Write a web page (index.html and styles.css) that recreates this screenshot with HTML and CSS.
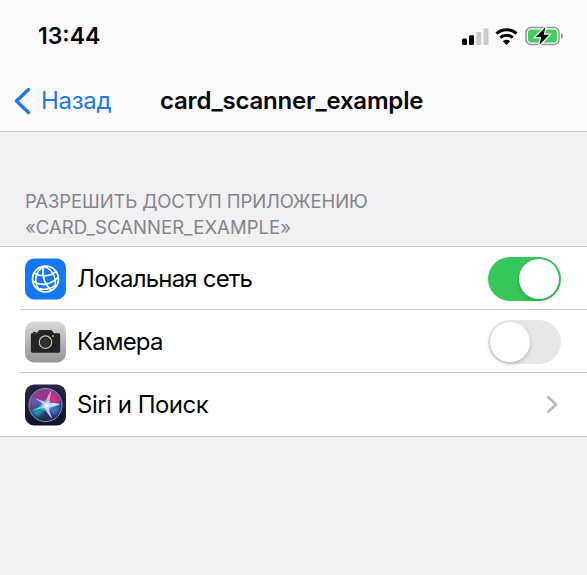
FILE: index.html
```html
<!DOCTYPE html>
<html lang="ru">
<head>
<meta charset="utf-8">
<meta name="viewport" content="width=device-width">
<title>card_scanner_example</title>
<link rel="stylesheet" href="styles.css">
</head>
<body>
<header class="header">
  <div class="status">
    <span class="time">13:44</span>
    <div class="indicators">
      <svg class="signal" width="27" height="17" viewBox="0 0 27 17">
        <rect x="0" y="10.500" width="5" height="6.500" rx="1.300"/>
        <rect x="7" y="7.300" width="5" height="9.700" rx="1.300"/>
        <rect class="dim" x="14.300" y="4" width="5" height="13" rx="1.300"/>
        <rect class="dim" x="21.500" y="0.300" width="5" height="16.700" rx="1.300"/>
      </svg>
      <svg class="wifi" width="23" height="17" viewBox="0 0 23 17">
        <path class="arc" d="M1.500 5.600C7.100 .3 15.900 .3 21.500 5.600M5.300 9.700C8.900 6.400 14.100 6.400 17.700 9.700"/>
        <path d="M7.900 13.200C10 11.400 13 11.400 15.100 13.200L11.500 16.900Z"/>
      </svg>
      <svg class="battery" width="39" height="20" viewBox="0 0 39 20">
        <rect class="shell" x="1" y="1.500" width="33" height="17" rx="5"/>
        <rect class="charge" x="3" y="3.500" width="29" height="13" rx="3"/>
        <path class="shell-tip" d="M36 7Q38.200 8 38.200 10T36 13Z"/>
        <path class="bolt" d="M20.500 1L10.800 11H16.300L14.300 19L24.200 8.800H18.700Z"/>
      </svg>
    </div>
  </div>
  <nav class="nav">
    <a class="back">
      <svg width="18" height="28" viewBox="0 0 18 28"><path d="M15.500 2.500L3.500 14L15.500 25.500"/></svg>
      <span>Назад</span>
    </a>
    <h1 class="title">card_scanner_example</h1>
  </nav>
</header>
<main>
  <h2 class="caption"><span class="line-one">РАЗРЕШИТЬ ДОСТУП ПРИЛОЖЕНИЮ</span><br><span class="line-two">«CARD_SCANNER_EXAMPLE»</span></h2>
  <ul class="list">
    <li class="row">
      <svg class="icon" viewBox="0 0 42 42">
        <rect width="42" height="42" rx="9.500" fill="#1677f2"/>
        <g fill="none" stroke="#fff" stroke-width="1.700">
          <circle cx="21" cy="21" r="13.300"/>
          <path d="M19 8C10 14 8.500 25 15 32.500M19 8C17 17 20 27 27 32.500M19 8C28 11 32 19 31 29M9.500 15C17 19 26 18.500 31.500 13.500M8 23C16 29 27 27 34 19M12 30C18 32.500 26 32 32 27"/>
        </g>
      </svg>
      <div class="cell"><span class="label network">Локальная сеть</span><span class="switch on"><i></i></span></div>
    </li>
    <li class="row">
      <svg class="icon" viewBox="0 0 42 42">
        <defs><linearGradient id="metal" x2="0" y2="1"><stop stop-color="#d9d9dc"/><stop offset="1" stop-color="#939398"/></linearGradient></defs>
        <rect width="42" height="42" rx="9.500" fill="url(#metal)"/>
        <path fill="#232428" d="M7.500 12H12L14.200 9.200Q14.600 8.700 15.300 8.700H26.300Q27 8.700 27.400 9.200L29.800 12H34.500Q36 12 36 13.500V30.500Q36 32 34.500 32H7.500Q6 32 6 30.500V13.500Q6 12 7.500 12Z"/>
        <path fill="#232428" d="M8 10.700H11.500V12H8z"/>
        <circle cx="21" cy="21.200" r="6.400" fill="#29292b" stroke="#c5c4bf" stroke-width="1.200"/>
        <circle cx="21" cy="21.200" r="4" fill="#34342f"/>
        <circle cx="28.700" cy="14.800" r="1" fill="#e2b51e"/>
      </svg>
      <div class="cell"><span class="label camera">Камера</span><span class="switch"><i></i></span></div>
    </li>
    <li class="row">
      <svg class="icon" viewBox="0 0 42 42">
        <defs>
          <linearGradient id="night" x2="0" y2="1"><stop stop-color="#272344"/><stop offset="1" stop-color="#10132c"/></linearGradient>
          <linearGradient id="orb" x1=".4" x2=".6" y2="1"><stop stop-color="#8a3e94"/><stop offset=".35" stop-color="#963580"/><stop offset=".55" stop-color="#2e4b85"/><stop offset="1" stop-color="#16294e"/></linearGradient>
          <radialGradient id="glow"><stop stop-color="#fff"/><stop offset=".35" stop-color="#d5eaff" stop-opacity=".8"/><stop offset="1" stop-color="#7abfff" stop-opacity="0"/></radialGradient>
          <filter id="soft" x="-20%" y="-20%" width="140%" height="140%"><feGaussianBlur stdDeviation="1.500"/></filter>
        </defs>
        <rect width="42" height="42" rx="9.500" fill="url(#night)"/>
        <circle cx="21" cy="21" r="17" fill="url(#orb)" stroke="#8b98b8" stroke-width="1"/>
        <g filter="url(#soft)">
          <path fill="#d83279" opacity=".8" d="M22 21L28 9Q34 12 35 20L23 23Z"/>
          <path fill="#1aa9bb" opacity=".8" d="M21 21L7 27Q10 33 15 32L22 23Z"/>
          <path fill="#397ee0" opacity=".8" d="M21 22L36 23Q34 30 29 32Z"/>
          <path fill="#4c62c8" opacity=".8" d="M21 21L7 12Q5 17 6 21Z"/>
        </g>
        <path fill="#65e3d4" d="M6 27Q15 24 20 19L23 23Q14 25 6 27Z"/>
        <path fill="#ef9fd4" d="M20.500 22Q22 13 27 6Q25.500 15 24 23Z"/>
        <path fill="#b9c9ff" d="M10 14Q18 16 24 20L22 23Q17 18 10 14Z"/>
        <path fill="#c4e8fb" d="M21 20Q30 18 36 20Q30 23.500 22 23.500Z"/>
        <path fill="#f1b9e5" d="M20 22L24 22Q25 29 28 35Q22 30 20 22Z"/>
        <circle cx="22" cy="21.500" r="7" fill="url(#glow)"/>
      </svg>
      <div class="cell"><span class="label siri">Siri и Поиск</span><svg class="chevron" width="12" height="19" viewBox="0 0 12 19"><path d="M2 2L10 9.500L2 17"/></svg></div>
    </li>
  </ul>
</main>
</body>
</html>
```
FILE: styles.css
```css
* { box-sizing: border-box; }
body {
  margin: 0;
  min-height: 575px;
  background: #f1f0f5;
  color: #050505;
  font-family: Inter, "Liberation Sans", sans-serif;
}
.header { height: 132px; background: #fbfbfd; border-bottom: 1px solid #c9c9cc; }
.status {
  height: 70px;
  padding: 2px 23px 0 38px;
  display: flex;
  align-items: center;
  justify-content: space-between;
}
.time { font-size: 23px; font-weight: 600; }
.indicators { display: flex; align-items: center; }
.wifi { margin: 0 7px 0 6px; }
.signal .dim { fill: #cbcbcd; }
.wifi .arc { fill: none; stroke: #000; stroke-width: 3; }
.battery .shell { fill: none; stroke: #94979a; stroke-width: 1.500px; }
.battery .charge { fill: #43ce62; }
.shell-tip { fill: #94979a; }
.bolt { fill: #000; stroke: #fbfbfd; stroke-width: 2.500px; paint-order: stroke; }
.nav { height: 61px; display: flex; align-items: center; padding-left: 13px; }
.back { width: 147px; display: flex; align-items: center; gap: 10px; color: #2079e2; font-size: 24px; letter-spacing: -.3px; }
.back path { fill: none; stroke: currentColor; stroke-width: 3.500px; stroke-linecap: round; stroke-linejoin: round; }
.title { margin: 0; font-size: 24px; font-weight: 600; letter-spacing: -.2px; white-space: nowrap; }
.caption {
  height: 114px;
  margin: 0;
  padding: 56px 0 0 25px;
  color: #858489;
  font-size: 18.500px;
  font-weight: 400;
  line-height: 26px;
  white-space: nowrap;
}
.line-one { letter-spacing: -.11px; }
.line-two { letter-spacing: .06px; }
.list { margin: 0; padding: 0; list-style: none; background: #fff; border-top: 1px solid #c9c9cc; border-bottom: 1px solid #c9c9cc; }
.row { height: 63px; padding-left: 25px; display: flex; align-items: center; background: linear-gradient(#c9c9cc, #c9c9cc) 20px 100% / 100% 1px no-repeat; }
.row:last-child { background: none; }
.icon { width: 41px; height: 42px; flex: none; }
.cell { flex: 1; display: flex; align-items: center; justify-content: space-between; padding: 0 26px 0 11px; }
.label { font-size: 24px; line-height: 30px; white-space: nowrap; }
.network { letter-spacing: -.8px; }
.camera { letter-spacing: -.8px; }
.siri { letter-spacing: -.5px; }
.switch { width: 73px; height: 44px; padding: 2px; display: flex; border-radius: 22px; background: #e7e7e9; }
.switch i { width: 40px; height: 40px; border-radius: 50%; background: #fff; box-shadow: 0 2px 4px #0003; }
.switch.on { background: #35c759; justify-content: flex-end; }
.chevron { margin-right: 3px; }
.chevron path { fill: none; stroke: #bababd; stroke-width: 2.500px; stroke-linecap: round; stroke-linejoin: round; }
```
